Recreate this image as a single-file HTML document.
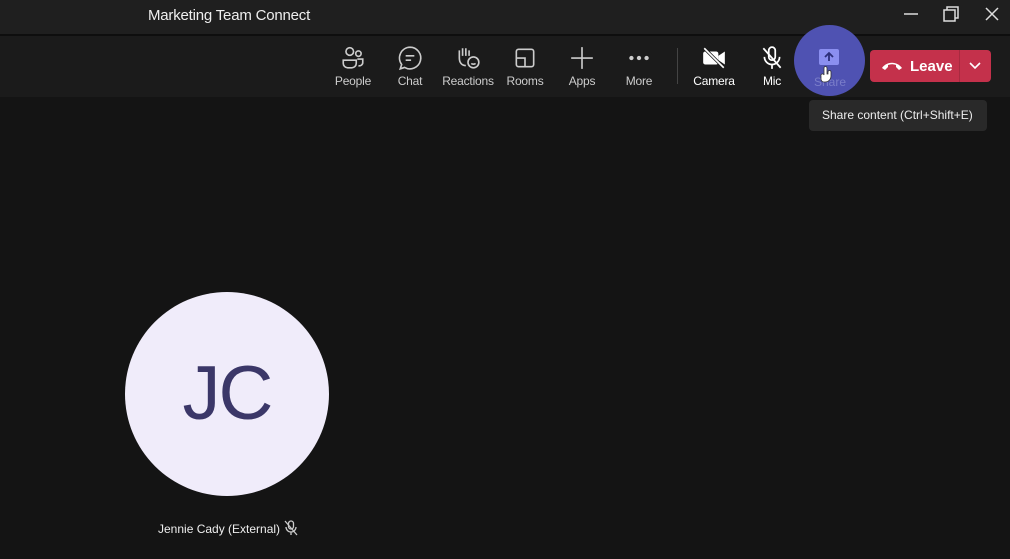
<!DOCTYPE html>
<html><head><meta charset="utf-8"><style>
*{margin:0;padding:0;box-sizing:border-box}
body{width:1010px;height:559px;background:#141414;font-family:"Liberation Sans",sans-serif;color:#fff;position:relative;overflow:hidden}
.title{position:absolute;left:0;top:0;width:1010px;height:34px;background:#1f1f1f}
.title span{position:absolute;left:148px;top:7px;font-size:15px;color:#eee;letter-spacing:-0.2px}
.sep{position:absolute;top:34px;left:0;width:1010px;height:2px;background:#0e0e0e}
.bar{position:absolute;top:36px;left:0;width:1010px;height:61px;background:#1b1b1b}
.btn{position:absolute;top:9px;width:56px;text-align:center;font-size:12px;color:#ccc;letter-spacing:-0.2px}
.btn svg{display:block;margin:0 auto 3px;width:26px;height:26px}
.btn span{display:block}
.wh{color:#fff}
.leave{position:absolute;left:870px;top:50px;width:121px;height:32px;background:#c4314b;border-radius:4px}
.leave .t{position:absolute;left:40px;top:8px;font-size:15px;font-weight:bold}
.leave .d{position:absolute;left:89px;top:0;width:1px;height:32px;background:#a82a40}
.share{position:absolute;left:794px;top:25px;width:71px;height:71px;border-radius:50%;background:#4f52b2}
.tip{position:absolute;left:809px;top:100px;width:178px;height:31px;background:#292929;border-radius:4px;font-size:12px;color:#eee;padding:8px 0 0 13px}
.av{position:absolute;left:125px;top:292px;width:204px;height:204px;border-radius:50%;background:#f0ecfa;color:#3b3768;font-size:76px;text-align:center;line-height:204px;letter-spacing:-2px}
.name{position:absolute;left:158px;top:522px;font-size:12px;color:#eee}
</style></head><body>
<div class="title"><span>Marketing Team Connect</span>
<svg style="position:absolute;left:900px;top:6px" width="100" height="20" stroke="#ddd" fill="none" stroke-width="1.5">
<line x1="4" y1="8" x2="18" y2="8"/>
<rect x="44" y="4" width="11" height="11"/><path d="M47 4V1h11v11h-3"/>
<path d="M86 2l12 12M98 2L86 14"/></svg></div>
<div class="sep"></div>
<div class="bar">
<div class="btn" style="left:325px"><svg viewBox="0 0 24 24" fill="none" stroke="#ccc" stroke-width="1.5"><circle cx="9" cy="6" r="3.5"/><circle cx="17" cy="8" r="2.5"/><path d="M3 14h12v3a4 4 0 0 1-4 4H7a4 4 0 0 1-4-4z"/><path d="M16 13h5v3a3 3 0 0 1-4 3"/></svg><span>People</span></div>
<div class="btn" style="left:382px"><svg viewBox="0 0 24 24" fill="none" stroke="#ccc" stroke-width="1.5"><path d="M12 2a10 10 0 1 1-5 18.7L3 22l1.3-4A10 10 0 0 1 12 2z"/><path d="M8 10h8M8 14h5"/></svg><span>Chat</span></div>
<div class="btn" style="left:440px"><svg viewBox="0 0 24 24" fill="none" stroke="#ccc" stroke-width="1.5"><path d="M4 12V5M7 10V3M10 10V3M13 10V5M4 12c0 4 2 7 6 7"/><circle cx="17" cy="16" r="5"/><path d="M15 17c1 1 3 1 4 0"/></svg><span>Reactions</span></div>
<div class="btn" style="left:497px"><svg viewBox="0 0 24 24" fill="none" stroke="#ccc" stroke-width="1.5"><rect x="4" y="4" width="16" height="16" rx="2"/><path d="M4 12h8v8"/></svg><span>Rooms</span></div>
<div class="btn" style="left:554px"><svg viewBox="0 0 24 24" fill="none" stroke="#ccc" stroke-width="1.5"><path d="M12 2v20M2 12h20"/></svg><span>Apps</span></div>
<div class="btn" style="left:611px"><svg viewBox="0 0 24 24" fill="#ccc"><circle cx="5" cy="12" r="2"/><circle cx="12" cy="12" r="2"/><circle cx="19" cy="12" r="2"/></svg><span>More</span></div>
<div style="position:absolute;left:677px;top:12px;width:1px;height:36px;background:#444"></div>
<div class="btn wh" style="left:686px"><svg viewBox="0 0 24 24"><rect x="2" y="6" width="14" height="12" rx="2" fill="#fff"/><path d="M16 10l6-4v12l-6-4z" fill="#fff"/><path d="M3 3l18 18" stroke="#1b1b1b" stroke-width="3"/><path d="M3 3l18 18" stroke="#fff" stroke-width="1.5"/></svg><span>Camera</span></div>
<div class="btn wh" style="left:744px"><svg viewBox="0 0 24 24" fill="none" stroke="#fff" stroke-width="1.6"><rect x="9" y="2" width="6" height="12" rx="3"/><path d="M5 11a7 7 0 0 0 14 0M12 18v4"/><path d="M4 3l16 18"/></svg><span>Mic</span></div>
</div>
<div class="share"><svg style="position:absolute;left:25px;top:24px" width="20" height="18"><rect width="20" height="16" rx="2" fill="#8b8ff0"/><path d="M10 12V4M6 8l4-4 4 4" stroke="#2d2f7a" stroke-width="1.8" fill="none"/></svg>
<span style="position:absolute;left:20px;top:50px;font-size:12px;color:#7a7dc9">Share</span>
<svg style="position:absolute;left:26px;top:40px" width="14" height="18"><path d="M4 10V3a1.5 1.5 0 0 1 3 0v6h1V7a1.5 1.5 0 0 1 3 0v4a6 6 0 0 1-6 6H4a3 3 0 0 1-3-3v-3a1.5 1.5 0 0 1 3-1z" fill="#fff" stroke="#333" stroke-width=".8"/></svg></div>
<div class="leave"><svg style="position:absolute;left:11px;top:11px" width="22" height="10"><path d="M1 7C6 0 16 0 21 7l-3 2-3-3V4c-3-1-5-1-8 0v2L4 9z" fill="#fff"/></svg><span class="t">Leave</span><div class="d"></div>
<svg style="position:absolute;left:98px;top:11px" width="14" height="10"><path d="M2 2l5 5 5-5" stroke="#fff" stroke-width="1.6" fill="none"/></svg></div>
<div class="tip">Share content (Ctrl+Shift+E)</div>
<div class="av">JC</div>
<div class="name">Jennie Cady (External)</div>
<svg style="position:absolute;left:284px;top:520px" width="14" height="16" fill="none" stroke="#ccc" stroke-width="1.3"><rect x="4.5" y="1" width="5" height="8" rx="2.5"/><path d="M2 7a5 5 0 0 0 10 0M7 12v3M1 1l12 14"/></svg>
</body></html>
